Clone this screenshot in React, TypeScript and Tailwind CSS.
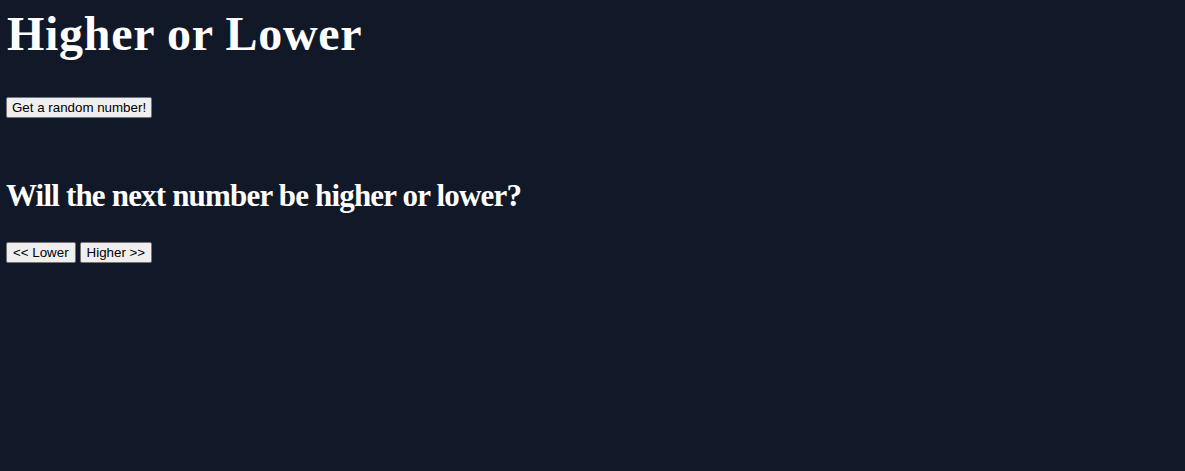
import React, { useState } from "react";

const btn =
  "h-[21px] px-[6px] bg-[#efefef] text-black border border-[#767676] rounded-[2px] text-[13.33px] leading-none font-['Liberation_Sans',Arial,sans-serif] hover:bg-[#e5e5e5]";

export default function App() {
  const [num, setNum] = useState<number | null>(null);

  return (
    <div className="min-h-screen w-full bg-[#111827] text-white pl-[6px] pt-[6px] font-['Liberation_Serif','Times_New_Roman',serif]">
      <h1 className="text-[48px] font-bold leading-[56px] pl-[1px] tracking-[0.7px]">Higher or Lower</h1>
      <div className="mt-[33px]">
        <button
          className="h-[21px] px-[5px] bg-[#efefef] text-black border border-[#767676] rounded-[2px] text-[13.33px] leading-none font-['Liberation_Sans',Arial,sans-serif] hover:bg-[#e5e5e5]"
          onClick={() => setNum(Math.floor(Math.random() * 100))}
        >
          Get a random number!
        </button>
        {num !== null && <span className="ml-2">{num}</span>}
      </div>
      <h2 className="mt-[58px] text-[31px] font-bold leading-[37px] tracking-[-0.82px]">
        Will the next number be higher or lower?
      </h2>
      <div className="mt-[28px] flex gap-[4px]">
        <button className={btn}>&lt;&lt; Lower</button>
        <button className={btn}>Higher &gt;&gt;</button>
      </div>
    </div>
  );
}
